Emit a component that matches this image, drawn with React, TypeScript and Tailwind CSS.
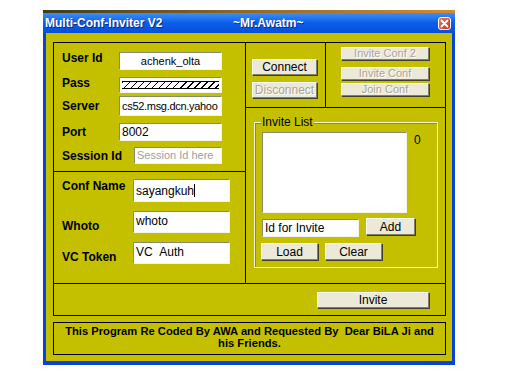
import React from 'react';

const btn =
  'flex items-center justify-center bg-[#ece9d8] border border-t-white border-l-white border-r-[#7f7f70] border-b-[#7f7f70] shadow-[1px_1px_0_#404030] text-[11px] leading-none';
const btnOff = `${btn} text-[#a8a597] [text-shadow:1px_1px_0_#ffffff]`;
const field =
  'bg-white border border-t-[#8a8a70] border-l-[#8a8a70] border-r-[#f4f4e8] border-b-[#f4f4e8] text-[11px] leading-none flex items-center px-[2px] overflow-hidden whitespace-nowrap';
const label = 'font-bold text-[12px] leading-[14px] text-black';

function CloseButton() {
  return (
    <div className="w-[13px] h-[13px] rounded-[3px] border border-white bg-gradient-to-br from-[#e8785a] to-[#c8301a] flex items-center justify-center">
      <svg width="9" height="9" viewBox="0 0 9 9">
        <path d="M1.5 1.5 L7.5 7.5 M7.5 1.5 L1.5 7.5" stroke="#ffffff" strokeWidth="1.8" strokeLinecap="round" />
      </svg>
    </div>
  );
}

export default function App() {
  return (
    <div className="w-[512px] h-[384px] bg-white overflow-hidden font-['Liberation_Sans',Arial,sans-serif]">
      <div className="ml-[43px] mt-[10px] w-[412px]">
        {/* wallpaper strip above the window */}
        <div className="h-[3px] bg-gradient-to-r from-[#3d3d1e] via-[#8f6a2a] to-[#d48a34]" />

        {/* title bar */}
        <div className="h-[20px] flex items-center pl-[2px] pr-[4px] bg-gradient-to-b from-[#3d8ef7] via-[#0b5de8] to-[#0650d8] text-white font-bold text-[12px] [text-shadow:1px_1px_0_#0a2a80]">
          <div className="w-[188px]">Multi-Conf-Inviter V2</div>
          <div className="flex-1">~Mr.Awatm~</div>
          <CloseButton />
        </div>

        {/* window body */}
        <div className="border-l-[3px] border-r-[3px] border-b-[4px] border-[#0a44d6] bg-[#c4c000] pl-[7px] pr-[6px] pt-[9px] pb-[6px]">
          <div className="border border-black">
            <div className="h-[241px] flex border-b border-black">
              {/* left column */}
              <div className="w-[192px] border-r border-black flex flex-col">
                <div className="h-[129px] border-b border-black pl-[8px] pt-[9px] flex flex-col">
                  <div className="flex items-start h-[18px]">
                    <div className={`${label} w-[57px] mt-[-1px]`}>User Id</div>
                    <div className={`${field} w-[103px] h-[18px] justify-center`}>achenk_olta</div>
                  </div>
                  <div className="flex items-start h-[16px] mt-[7px]">
                    <div className={`${label} w-[57px] mt-[-1px]`}>Pass</div>
                    <div className={`${field} w-[103px] h-[16px]`}>
                      <div className="w-full h-[8px] border-t border-b border-black bg-[repeating-linear-gradient(135deg,#000_0_1px,transparent_1px_5px)]" />
                    </div>
                  </div>
                  <div className="flex items-center h-[20px] mt-[3px]">
                    <div className={`${label} w-[57px]`}>Server</div>
                    <div className={`${field} w-[103px] h-[20px] text-[11px] tracking-[-0.3px] px-[1px]`}>cs52.msg.dcn.yahoo</div>
                  </div>
                  <div className="flex items-center h-[18px] mt-[7px]">
                    <div className={`${label} w-[57px]`}>Port</div>
                    <div className={`${field} w-[103px] h-[18px] text-[12px]`}>8002</div>
                  </div>
                  <div className="flex items-center h-[17px] mt-[6px]">
                    <div className={`${label} w-[72px]`}>Session Id</div>
                    <div className={`${field} w-[88px] h-[17px] text-[#a0a0a0]`}>Session Id here</div>
                  </div>
                </div>

                <div className="flex-1 pl-[8px] pt-[7px] flex flex-col">
                  <div className="flex items-start h-[23px]">
                    <div className={`${label} w-[71px]`}>Conf Name</div>
                    <div className={`${field} w-[97px] h-[23px] text-[12px]`}>
                      sayangkuh<span className="inline-block w-px h-[13px] bg-black" />
                    </div>
                  </div>
                  <div className="flex items-start h-[22px] mt-[9px]">
                    <div className={`${label} w-[71px] mt-[8px]`}>Whoto</div>
                    <div className={`${field} w-[97px] h-[22px] text-[12px] items-start pt-[3px]`}>whoto</div>
                  </div>
                  <div className="flex items-start h-[22px] mt-[9px]">
                    <div className={`${label} w-[71px] mt-[8px]`}>VC Token</div>
                    <div className={`${field} w-[97px] h-[22px] text-[12px] items-start pt-[3px]`}>VC&nbsp;&nbsp;Auth</div>
                  </div>
                </div>
              </div>

              {/* right column */}
              <div className="flex-1 flex flex-col">
                <div className="h-[65px] border-b border-black flex">
                  <div className="w-[80px] border-r border-black pl-[6px] pt-[16px] flex flex-col gap-[7px]">
                    <div className={`${btn} w-[65px] h-[16px] text-[12px]`}>Connect</div>
                    <div className={`${btnOff} w-[65px] h-[16px] text-[12px]`}>Disconnect</div>
                  </div>
                  <div className="flex-1 pl-[15px] pt-[4px] flex flex-col">
                    <div className={`${btnOff} w-[88px] h-[13px]`}>Invite Conf 2</div>
                    <div className={`${btnOff} w-[88px] h-[13px] mt-[7px]`}>Invite Conf</div>
                    <div className={`${btnOff} w-[88px] h-[13px] mt-[3px]`}>Join Conf</div>
                  </div>
                </div>

                <div className="flex-1 pl-[8px] pt-[14px]">
                  <div className="relative w-[184px] h-[146px] border border-[#f4f4dc] shadow-[inset_1px_1px_0_#8a8a40]">
                    <div className="absolute left-[6px] top-[-7px] px-[1px] bg-[#c4c000] text-[12px] leading-[13px]">Invite List</div>
                    <div className="pl-[7px] pt-[9px] flex items-start">
                      <div className="w-[145px] h-[81px] bg-white border border-t-[#8a8a70] border-l-[#8a8a70] border-r-[#f4f4e8] border-b-[#f4f4e8]" />
                      <div className="ml-[7px] mt-[2px] text-[12px] leading-none">0</div>
                    </div>
                    <div className="pl-[7px] mt-[6px] flex items-start">
                      <div className={`${field} w-[97px] h-[18px] text-[12px]`}>Id for Invite</div>
                      <div className={`${btn} w-[49px] h-[17px] ml-[7px] mt-[-1px] text-[12px]`}>Add</div>
                    </div>
                    <div className="pl-[6px] mt-[6px] flex gap-[7px]">
                      <div className={`${btn} w-[57px] h-[17px] text-[12px]`}>Load</div>
                      <div className={`${btn} w-[57px] h-[17px] text-[12px]`}>Clear</div>
                    </div>
                  </div>
                </div>
              </div>
            </div>

            <div className="h-[31px] flex items-center justify-end pr-[16px]">
              <div className={`${btn} w-[112px] h-[16px] text-[12px]`}>Invite</div>
            </div>
          </div>

          {/* footer credit */}
          <div className="mt-[6px] h-[33px] border border-black pt-[2px] text-center font-bold text-[11.2px] leading-[12px]">
            This Program Re Coded By AWA and Requested By&nbsp; Dear BiLA Ji and
            <br />
            his Friends.
          </div>
        </div>
      </div>
    </div>
  );
}
